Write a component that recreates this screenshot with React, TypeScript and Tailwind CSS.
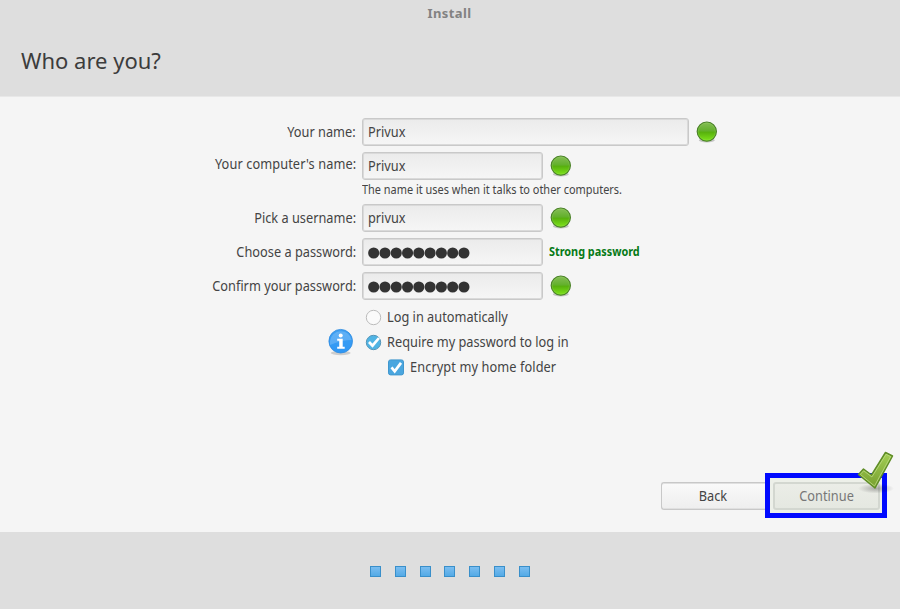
import React from "react";

function Text({ children, from = "left" }: { children: React.ReactNode; from?: "left" | "right" | "center" }) {
  const origin = from === "left" ? "origin-left" : from === "right" ? "origin-right" : "origin-center";
  return <span className={`inline-block scale-x-[0.893] whitespace-nowrap ${origin}`}>{children}</span>;
}

function Field({ value, wide, secret }: { value?: string; wide?: boolean; secret?: boolean }) {
  return (
    <div
      className={`ml-1.5 flex h-7 shrink-0 items-center rounded-[3px] border-[1.5px] border-[#c9c9c9] bg-linear-to-b from-[#ebebeb] to-[#f6f6f6] pl-[5px] shadow-[inset_0_0_0_1px_#dadada] ${wide ? "w-[327px]" : "w-[181px]"}`}
    >
      {secret ? (
        <svg className="mt-[2px]" width="104" height="12" viewBox="0 0 104 12">
          {Array.from({ length: 9 }, (_, i) => (
            <circle key={i} cx={5.7 + i * 11.28} cy="6" r="5.55" fill="#333" />
          ))}
        </svg>
      ) : (
        <Text>{value}</Text>
      )}
    </div>
  );
}

function Led() {
  return (
    <svg className="ml-[7px] shrink-0" width="22" height="24" viewBox="0 0 22 24">
      <defs>
        <linearGradient id="led" x1="0" y1="0" x2="0" y2="1">
          <stop offset="0" stopColor="#86bd58" />
          <stop offset=".47" stopColor="#62b02b" />
          <stop offset=".53" stopColor="#57b00d" />
          <stop offset="1" stopColor="#80e61b" />
        </linearGradient>
      </defs>
      <ellipse cx="10.8" cy="20.3" rx="8" ry="2.2" fill="#000" opacity=".2" />
      <circle cx="10.8" cy="11.6" r="9.6" fill="url(#led)" stroke="#4a8128" strokeWidth="1.2" />
      <circle cx="10.8" cy="11.6" r="8.6" fill="none" stroke="#a3dd6c" strokeWidth=".7" opacity=".4" />
    </svg>
  );
}

function Row({ label, children, up }: { label: string; children: React.ReactNode; up?: boolean }) {
  return (
    <div className="flex h-7 items-center">
      <div className={`w-[356px] shrink-0 text-right ${up ? "pb-1 tracking-[0.1px]" : ""}`}>
        <Text from="right">{label}</Text>
      </div>
      {children}
    </div>
  );
}

function Info() {
  return (
    <svg width="28" height="30" viewBox="0 0 28 30">
      <defs>
        <linearGradient id="info" x1="0" y1="0" x2="0" y2="1">
          <stop offset="0" stopColor="#3fa0f2" />
          <stop offset="1" stopColor="#2e97f5" />
        </linearGradient>
      </defs>
      <ellipse cx="13.7" cy="26" rx="10" ry="2.2" fill="#000" opacity=".16" />
      <circle cx="13.7" cy="14.2" r="11.8" fill="url(#info)" stroke="#308be0" strokeWidth=".8" />
      <path d="M3 14a11 11 0 0 1 21.7-1Q15 13 3 18Z" fill="#fff" opacity=".18" />
      <circle cx="13.7" cy="8.4" r="2" fill="#fff" />
      <path d="M10.2 11.7h5.5v8h2v2h-7.5v-2h2v-6h-2z" fill="#fff" />
    </svg>
  );
}

export default function App() {
  return (
    <div className="flex h-[609px] w-[900px] flex-col overflow-hidden bg-[#dedede] font-['Noto_Sans','Open_Sans',sans-serif] text-[14.3px] leading-5 text-[#444]">
      <header className="h-24 shrink-0">
        <div className="pt-[3px] pr-px text-center text-[13px] font-bold tracking-[0.4px] text-[#828282]">Install</div>
        <h1 className="pt-[21px] pl-[21px] text-[22px] leading-8 text-[#3c3c3c]">Who are you?</h1>
      </header>
      <main className="h-[436px] shrink-0 border-t border-[#e8e8e8] bg-[#f5f5f5] pt-[21px]">
        <Row label="Your name:">
          <Field value="Privux" wide />
          <Led />
        </Row>
        <div className="mt-1.5">
          <Row label="Your computer's name:" up>
            <Field value="Privux" />
            <Led />
          </Row>
        </div>
        <div className="h-6 pl-[362px] text-[11.8px] leading-[18px]">
          <span className="inline-block origin-left scale-x-[0.927]">The name it uses when it talks to other computers.</span>
        </div>
        <Row label="Pick a username:">
          <Field value="privux" />
          <Led />
        </Row>
        <div className="mt-1.5">
          <Row label="Choose a password:">
            <Field secret />
            <span className="ml-1.5 inline-block origin-left scale-x-[0.905] text-[12px] font-bold text-[#067a16]">Strong password</span>
          </Row>
        </div>
        <div className="mt-1.5">
          <Row label="Confirm your password:">
            <Field secret />
            <Led />
          </Row>
        </div>
        <div className="mt-1 flex">
          <div className="w-[365px] shrink-0 pt-[23px] pl-[327px]">
            <Info />
          </div>
          <div>
            <div className="flex h-[25px] items-center gap-[5px]">
              <svg width="17" height="18" viewBox="0 0 17 18">
                <circle cx="8.5" cy="9.5" r="7.2" fill="#fafafa" stroke="#bcbcbc" />
              </svg>
              <Text>Log in automatically</Text>
            </div>
            <div className="flex h-[25px] items-center gap-[5px]">
              <svg width="17" height="18" viewBox="0 0 17 18">
                <circle cx="8.5" cy="9.5" r="7.2" fill="#50b4e4" stroke="#5595b8" />
                <path d="m4 9 3.5 3.7L14 5" fill="none" stroke="#fff" strokeWidth="2.7" />
              </svg>
              <Text>Require my password to log in</Text>
            </div>
            <div className="flex h-[26px] items-center gap-[5px] pl-[22px] tracking-[0.1px]">
              <svg width="18" height="18" viewBox="0 0 18 18">
                <rect x="1.5" y="1.9" width="15" height="15" rx="2" fill="#4aa6df" stroke="#4097ce" />
                <path d="m4.5 9.4 3.2 4L14 4.9" fill="none" stroke="#fff" strokeWidth="2.7" />
              </svg>
              <Text>Encrypt my home folder</Text>
            </div>
          </div>
        </div>
        <div className="mt-[93px] flex h-[45px] items-center pl-[661px]">
          <div className="flex h-7 w-[104px] items-center justify-center rounded-l-[3px] border-[1.5px] border-r-0 border-[#c8c8c8] bg-linear-to-b from-[#fafafa] to-[#eeeeee] pr-px shadow-[inset_0_-1px_0_0_#e0e0e0,inset_0_1px_0_0_#e0e0e0]">
            <Text from="center">Back</Text>
          </div>
          <div className="relative flex h-[45px] w-[122px] items-center justify-center border-5 border-[#0009ff] bg-[#edf0e9]">
            <div className="flex h-7 w-[107px] items-center justify-center rounded-[3px] border-2 border-[#d3d7d0] bg-linear-to-b from-[#ebede7] to-[#e5e8e1] pl-0.5 text-[#777]">
              <Text from="center">Continue</Text>
            </div>
            <svg className="absolute -top-[27px] left-[84px]" width="44" height="46" viewBox="0 0 44 46">
              <defs>
                <linearGradient id="tick" x1="0" y1="0" x2="0" y2="1">
                  <stop offset="0" stopColor="#a3cf54" />
                  <stop offset="1" stopColor="#779f30" />
                </linearGradient>
                <radialGradient id="shade">
                  <stop offset="0" stopOpacity=".28" />
                  <stop offset="1" stopOpacity="0" />
                </radialGradient>
              </defs>
              <ellipse cx="22" cy="37.5" rx="18" ry="5" fill="url(#shade)" />
              <path d="m4.5 23.5 5-5.5 8 6L31.5 1.5 38.5 5 21 37Z" fill="url(#tick)" stroke="#5f8d26" strokeWidth="1.5" strokeLinejoin="round" />
              <path d="m6.3 23.4 3.4-3.6 8.2 6.1L32.1 3.3l4.5 2.3L20.5 35Z" fill="none" stroke="#bcda82" strokeWidth=".8" />
            </svg>
          </div>
        </div>
      </main>
      <footer className="flex flex-1 gap-[13.8px] pt-[34px] pl-[370px]">
        {Array.from({ length: 7 }, (_, i) => (
          <span key={i} className="h-[11px] w-[11px] border border-[#398fca] bg-linear-to-b from-[#7abdf0] to-[#53aae6]" />
        ))}
      </footer>
    </div>
  );
}
